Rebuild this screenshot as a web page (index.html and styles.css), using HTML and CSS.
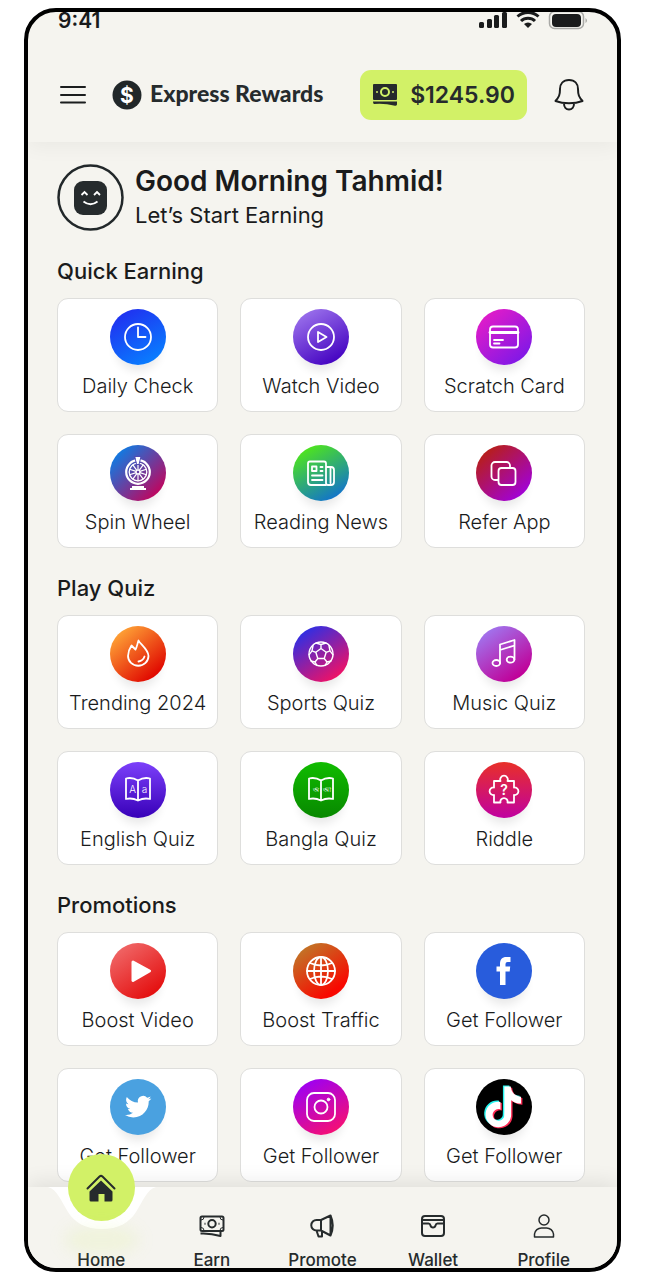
FILE: index.html
```
<!DOCTYPE html>
<html lang="en">
<head>
    <meta charset="UTF-8">
    <meta name="viewport" content="width=device-width, initial-scale=1.0">
    <title>Express Rewards</title>
    <link rel="stylesheet" href="styles.css">
</head>
<body>

    <div class="phone">
        <header class="header">
            <div class="status-bar">
                <span>9:41</span>
                <svg width="108" height="18" viewBox="0 0 108 18" aria-hidden="true">
                    <g fill="#1a1b1c">
                        <rect x="0" y="10" width="5" height="6" rx="1.5"/>
                        <rect x="8" y="7" width="5" height="9" rx="1.5"/>
                        <rect x="15" y="3" width="5" height="13" rx="1.5"/>
                        <rect x="23" y="0" width="5" height="16" rx="1.5"/>
                        <path d="M49 16l-4-4a6 6 0 0 1 8 0z"/>
                        <rect x="73" y="2" width="29" height="13" rx="4"/>
                    </g>
                    <path d="M42 9a10 10 0 0 1 14 0M38.500 4.500a15.500 15.500 0 0 1 21 0" fill="none" stroke="#1a1b1c" stroke-width="3"/>
                    <rect x="70.500" y="-.5" width="34" height="17" rx="5" fill="none" stroke="#a9a9a6" stroke-width="1.500"/>
                    <path d="M106.500 6v5q1.500-1 1.500-2.500T106.500 6z" fill="#a9a9a6"/>
                </svg>
            </div>
            <div class="toolbar">
                <button class="icon-btn" aria-label="Menu">
                    <svg width="26" height="20" viewBox="0 0 26 20" fill="none" stroke="#1b1d1e" stroke-width="2" stroke-linecap="round"><path d="M1 2h24M1 10h24M1 17.500h24"/></svg>
                </button>
                <a class="brand" href="#">
                    <svg width="30" height="30" viewBox="0 0 30 30"><circle cx="15" cy="15" r="14.500" fill="#212729"/><text class="coin" x="15" y="22.500" text-anchor="middle">$</text></svg>
                    <span>Express Rewards</span>
                </a>
                <button class="balance">
                    <svg width="26" height="24" viewBox="0 0 26 24"><path fill="#262b2c" d="M2 1h22a1 1 0 0 1 1 1v14a1 1 0 0 1-1 1H2a1 1 0 0 1-1-1V2a1 1 0 0 1 1-1zM1 18.500h24v3q-.5 1.500-2 1.200Q12 20 2 21q-1-.5-1-2.500z"/><circle cx="13" cy="9" r="4" fill="none" stroke="#d2f167" stroke-width="2"/><circle cx="5" cy="9" r="1" fill="#d2f167"/><circle cx="21" cy="9" r="1" fill="#d2f167"/></svg>
                    $1245.90
                </button>
                <button class="icon-btn" aria-label="Notifications">
                    <svg width="32" height="34" viewBox="0 0 32 34" fill="none" stroke="#1b1d1e" stroke-width="2" stroke-linejoin="round"><path d="M16 2C10 2 7 6 7 11c0 6-1 8-4.500 12 8 3 19 3 27 0C26 19 25 17 25 11c0-5-3-9-9-9zM11 25.500c0 3.500 2 6 5 6s5-2.500 5-6"/></svg>
                </button>
            </div>
        </header>

        <main class="content">
            <div class="greeting">
                <svg width="67" height="67" viewBox="0 0 67 67" aria-hidden="true">
                    <circle cx="33.500" cy="33.500" r="32" fill="none" stroke="#22282a" stroke-width="2.500"/>
                    <rect x="17" y="17" width="33" height="34" rx="9" fill="#262b2d"/>
                    <path d="M24.500 31l3-3 3 3M37 31l3-3 3 3M26.500 37.500q7 5.500 14 0" fill="none" stroke="#fff" stroke-width="1.800"/>
                </svg>
                <div>
                    <h1>Good Morning Tahmid!</h1>
                    <p>Let’s Start Earning</p>
                </div>
            </div>

            <section>
                <h2>Quick Earning</h2>
                <div class="grid">
                    <a class="card" href="#">
                        <svg class="icon clock" viewBox="0 0 56 56"><circle cx="28" cy="28" r="13"/><path d="M28 18.500v9.500h7.500"/></svg>
                        <span>Daily Check</span>
                    </a>
                    <a class="card" href="#">
                        <svg class="icon watch" viewBox="0 0 56 56"><circle cx="28" cy="28" r="13"/><path d="M25 23l8.500 5-8.500 5z"/></svg>
                        <span>Watch Video</span>
                    </a>
                    <a class="card" href="#">
                        <svg class="icon scratch" viewBox="0 0 56 56"><rect x="14" y="17.500" width="28" height="21" rx="3"/><path d="M18 31h9M18 34.500h5.500"/><path d="M14 23.500h28" stroke-width="2.800"/></svg>
                        <span>Scratch Card</span>
                    </a>
                    <a class="card" href="#">
                        <svg class="icon spin" viewBox="0 0 56 56">
                            <circle cx="28" cy="27" r="11.800" stroke-width="2.200"/>
                            <g stroke-width="1.200"><circle cx="28" cy="27" r="8.800" stroke-width="1.300"/><circle cx="28" cy="27" r="2"/><path d="M28 18.200V25M28 29v6.800M22.800 19.900l4 5.500M29.200 28.600l4 5.500M19.600 24.300l6.500 2.100M29.900 27.600l6.500 2.100M19.600 29.700l6.500-2.100M29.900 26.400l6.500-2.100M22.800 34.100l4-5.500M29.200 25.400l4-5.500"/></g>
                            <path d="M25 11.500h6l-2 8h-2z" fill="#fff" stroke="#514bb4" stroke-width="1"/>
                            <path d="M22 41h12v2h2v2H20v-2h2z" fill="#fff" stroke="none"/>
                        </svg>
                        <span>Spin Wheel</span>
                    </a>
                    <a class="card" href="#">
                        <svg class="icon news" viewBox="0 0 56 56"><path d="M33 40H18a3 3 0 0 1-3-3V18.500a2 2 0 0 1 2-2h14a2 2 0 0 1 2 2V38a2 2 0 0 0 2 2h3a3 3 0 0 0 3-3V25a3 3 0 0 0-3-3h-5"/><rect x="19" y="21.500" width="4.500" height="4.500"/><path d="M27.500 22h2M27.500 26h2M19 30.500h10.500M19 35h10.500M37.500 23v15"/></svg>
                        <span>Reading News</span>
                    </a>
                    <a class="card" href="#">
                        <svg class="icon refer" viewBox="0 0 56 56"><rect x="22.500" y="23" width="17" height="17" rx="3"/><path d="M22 35h-3a3.500 3.500 0 0 1-3.500-3.500v-11A3.500 3.500 0 0 1 19 17h11.500a3.500 3.500 0 0 1 3.500 3.500V23"/></svg>
                        <span>Refer App</span>
                    </a>
                </div>
            </section>

            <section>
                <h2>Play Quiz</h2>
                <div class="grid">
                    <a class="card" href="#">
                        <svg class="icon trending" viewBox="0 0 56 56"><path d="M28.500 14.500c1 3 10 9 10 15.500a10.200 9.700 0 0 1-20.500 0c0-5 1.500-7.500 3.500-10.500l4 4c1.500-2.500 1.800-5.500 3-9zM34.500 30.500c-1 3-3 4.500-6 5"/></svg>
                        <span>Trending 2024</span>
                    </a>
                    <a class="card" href="#">
                        <svg class="icon sports" viewBox="0 0 56 56"><g stroke-width="1.400"><circle cx="28" cy="28" r="12"/><path d="M28 22.500l5.200 3.800-2 6.200h-6.400l-2-6.200zM28 22.500v-4l-5-1.500M28 18.500l5-1.500M33.200 26.300l3.800-1.500-1-5M37 24.800l3 4M31.200 32.500l2.800 3.500 4-1M34 36l-2 3.500M24.800 32.500L22 36l2 3.500M22 36l-4-1M22.800 26.300L19 24.800l1-5M19 24.800l-3 4"/></g></svg>
                        <span>Sports Quiz</span>
                    </a>
                    <a class="card" href="#">
                        <svg class="icon music" viewBox="0 0 56 56"><path d="M24 37V18.500L38.500 14v19.500M24 24l14.500-4.500"/><ellipse cx="20.300" cy="37" rx="3.800" ry="3"/><ellipse cx="34.500" cy="33.700" rx="3.800" ry="3"/></svg>
                        <span>Music Quiz</span>
                    </a>
                    <a class="card" href="#">
                        <svg class="icon english" viewBox="0 0 56 56"><path d="M28 18.500C24 16 20 15.500 16 16.500v20.500c4-1 8-.5 12 1.500 4-2 8-2.500 12-1.500V16.500C36 15.500 32 16 28 18.500zM28 18.500v20"/><text x="22.500" y="31" font-size="10">A</text><text x="34.500" y="31" font-size="10">a</text></svg>
                        <span>English Quiz</span>
                    </a>
                    <a class="card" href="#">
                        <svg class="icon bangla" viewBox="0 0 56 56"><path d="M28 18.500C24 16 20 15.500 16 16.500v20.500c4-1 8-.5 12 1.500 4-2 8-2.500 12-1.500V16.500C36 15.500 32 16 28 18.500zM28 18.500v20"/><text x="22.500" y="30" font-size="7">অ</text><text x="34" y="30" font-size="7">আ</text></svg>
                        <span>Bangla Quiz</span>
                    </a>
                    <a class="card" href="#">
                        <svg class="icon riddle" viewBox="0 0 56 56"><path d="M18 19h6.500a3.800 3.800 0 1 1 7 0H38v6.500a3.800 3.800 0 1 1 0 7.500v7.500h-6.500a3.600 3.600 0 1 0-7 0H18V33a3.800 3.800 0 1 1 0-7.500z"/><text x="28" y="33" font-size="14" font-weight="600">?</text></svg>
                        <span>Riddle</span>
                    </a>
                </div>
            </section>

            <section>
                <h2>Promotions</h2>
                <div class="grid">
                    <a class="card" href="#">
                        <svg class="icon boost" viewBox="0 0 56 56"><path d="M23 19l16.500 9L23 37.500z" fill="#fff" stroke-width="3"/></svg>
                        <span>Boost Video</span>
                    </a>
                    <a class="card" href="#">
                        <svg class="icon traffic" viewBox="0 0 56 56"><circle cx="28" cy="28" r="14"/><ellipse cx="28" cy="28" rx="7" ry="14"/><path d="M28 14v28M14 28h28M17 20q11 5 22 0M17 36q11-5 22 0"/></svg>
                        <span>Boost Traffic</span>
                    </a>
                    <a class="card" href="#">
                        <svg class="icon facebook" viewBox="0 0 56 56"><path d="M24 42V28.500h-3.500v-5H24V21c0-4.500 2-7 6.500-7h4v5h-3q-2 0-2 2v2.500h4.700l-.5 5h-4.200V42z" fill="#fff" stroke="none"/></svg>
                        <span>Get Follower</span>
                    </a>
                    <a class="card" href="#">
                        <svg class="icon twitter" viewBox="0 0 56 56"><path transform="translate(15 14.500) scale(1.100)" fill="#fff" stroke="none" d="M23.950 4.570a10 10 0 0 1-2.820.770 4.960 4.960 0 0 0 2.160-2.720c-.95.550-2 .950-3.130 1.180a4.920 4.920 0 0 0-8.380 4.480C7.690 8.090 4.070 6.130 1.640 3.160a4.920 4.920 0 0 0 1.520 6.570 4.900 4.900 0 0 1-2.230-.61v.06a4.920 4.920 0 0 0 3.950 4.830 5 5 0 0 1-2.210.08 4.940 4.940 0 0 0 4.600 3.420A9.870 9.870 0 0 1 0 19.540a14 14 0 0 0 7.550 2.210c9.050 0 14-7.500 14-13.980 0-.21 0-.42-.02-.63a9.940 9.940 0 0 0 2.460-2.550z"/></svg>
                        <span>Get Follower</span>
                    </a>
                    <a class="card" href="#">
                        <svg class="icon instagram" viewBox="0 0 56 56"><rect x="14" y="14" width="28" height="28" rx="7"/><circle cx="28" cy="28" r="6.500"/><circle cx="35.500" cy="20.500" r="1.300" fill="#fff" stroke-width="1"/></svg>
                        <span>Get Follower</span>
                    </a>
                    <a class="card" href="#">
                        <svg class="icon tiktok" viewBox="0 0 56 56">
                            <defs><path id="note" d="M12.500 0h3.900c.1 1.500.6 3.100 1.800 4.200 1.100 1.100 2.700 1.600 4.200 1.800v4c-1.400 0-2.900-.3-4.200-1-.6-.3-1.100-.6-1.600-.9v8.700c-.1 1.400-.5 2.800-1.400 3.900-1.300 1.900-3.600 3.200-5.900 3.200-1.400.1-2.900-.3-4.100-1-2-1.200-3.400-3.400-3.600-5.700v-1.500c.2-1.900 1.100-3.700 2.600-5 1.700-1.400 4-2.100 6.100-1.700v4.400c-1-.3-2.100-.2-3 .4-.6.4-1.100 1-1.400 1.800-.2.500-.2 1.100-.1 1.600.2 1.600 1.800 3 3.500 2.900 1.100 0 2.200-.7 2.800-1.600.2-.3.400-.7.400-1.100.1-1.800.1-3.600.1-5.300V0z"/></defs>
                            <g stroke="none"><use href="#note" fill="#25f4ee" transform="translate(5.500 6.500) scale(1.700)"/><use href="#note" fill="#fe2c55" transform="translate(8.300 8.700) scale(1.700)"/><use href="#note" fill="#fff" transform="translate(6.900 7.600) scale(1.700)"/></g>
                        </svg>
                        <span>Get Follower</span>
                    </a>
                </div>
            </section>
        </main>

        <nav class="nav">
            <!-- white curve behind the active tab -->
            <svg class="notch" width="108" height="42" viewBox="0 0 108 42" aria-hidden="true"><path d="M0 0C9 2 13 14 20 25S38 42 54 42 81 36 88 25 99 2 108 0z" fill="#fff"/></svg>
            <a class="active" href="#">
                <span class="home-btn"><svg width="30" height="28" viewBox="0 0 30 28"><path d="M1.500 14.500L13.500 2.500q1.500-1.200 3 0l12 12" fill="none" stroke="#262b2c" stroke-width="2" stroke-linecap="round"/><path d="M15 6.500L26.500 17.500V26q0 1.500-1.500 1.500h-6.500V20h-6v7.500H5q-1.500 0-1.500-1.500v-8.500z" fill="#262b2c"/></svg></span>
                Home
            </a>
            <a href="#">
                <svg width="28" height="28" viewBox="0 0 28 28"><rect x="2.500" y="4.500" width="23" height="14.500" rx="1.500"/><circle cx="14" cy="11.700" r="3.700"/><path d="M6.500 11.700h1M20.500 11.700h1M2.500 21.500q10-.5 20 2.500v-4"/><path d="M3 8q3 0 3-3M25 8q-3 0-3-3M3 15.500q3 0 3 3M25 15.500q-3 0-3 3" stroke-width="1"/></svg>
                Earn
            </a>
            <a href="#">
                <svg width="28" height="28" viewBox="0 0 28 28"><path d="M13 8H8.500a5.200 5.200 0 0 0 0 10.500H13l9.500 5V3.500zM13 8v10.500M22.500 3.500q4.500 10 0 20M8.500 18.500l2 6H14v-5.500"/></svg>
                Promote
            </a>
            <a href="#">
                <svg width="28" height="28" viewBox="0 0 28 28"><rect x="3" y="4" width="22" height="20" rx="3"/><path d="M3 8h22M3 11.500h6.500q1.500 0 2 2t2.500 2 2.500-2 2-2H25"/></svg>
                Wallet
            </a>
            <a href="#">
                <svg width="28" height="28" viewBox="0 0 28 28"><g stroke-width="1.500"><circle cx="14" cy="8" r="5"/><path d="M4.500 25v-3a7 7 0 0 1 7-6h5a7 7 0 0 1 7 6v3z"/></g></svg>
                Profile
            </a>
        </nav>
    </div>

</body>
</html>
```
FILE: styles.css
```
* {
    box-sizing: border-box;
}
body {
    margin: 0;
    padding: 8px 24px;
    background: #fff;
    font-family: Inter, "Noto Sans", sans-serif;
    color: #1a1b1c;
}
a {
    color: inherit;
    text-decoration: none;
}
button {
    border: none;
    padding: 0;
    background: none;
    font-family: inherit;
    color: inherit;
    cursor: pointer;
}
svg {
    display: block;
    flex-shrink: 0;
}
.phone {
    border: 4px solid #000;
    border-radius: 32px;
    background: #f5f4ef;
    overflow: hidden;
}

/* Header */
.header {
    padding: 0 30px 22px;
    box-shadow: 0 4px 20px rgba(0, 0, 0, 0.05);
}
.status-bar {
    display: flex;
    justify-content: space-between;
    font-size: 21px;
    line-height: 18px;
    font-weight: 600;
}
.toolbar {
    display: flex;
    align-items: center;
    margin-top: 40px;
}
.icon-btn {
    padding: 0 2px;
}
.brand {
    display: flex;
    align-items: center;
    gap: 8px;
    margin-left: 24px;
    margin-right: auto;
    font-family: Lato, sans-serif;
    font-size: 23px;
    line-height: 26px;
    font-weight: 900;
    color: #262b2d;
}
.brand span {
    padding-bottom: 4px;
}
.coin {
    font: 700 21px Inter, sans-serif;
    fill: #fff;
}
.balance {
    display: flex;
    align-items: center;
    gap: 12px;
    height: 50px;
    margin-right: 24px;
    padding: 0 12px;
    border-radius: 11px;
    background: #d2f167;
    font-size: 23px;
    font-weight: 600;
    color: #262b2c;
}

/* Content */
.content {
    padding: 22px 32px 5px 29px;
}
.greeting {
    display: flex;
    gap: 11px;
    margin-bottom: 24px;
}
.greeting h1 {
    margin: 0;
    font-size: 28px;
    line-height: 35px;
    font-weight: 600;
}
.greeting p {
    margin: 0;
    font-size: 22px;
    line-height: 32px;
}
section + section {
    margin-top: 24px;
}
h2 {
    margin: 0 0 11px;
    font-size: 22px;
    line-height: 32px;
    font-weight: 500;
}
.grid {
    display: grid;
    grid-template-columns: repeat(3, 1fr);
    gap: 22px;
}
.card {
    display: flex;
    flex-direction: column;
    align-items: center;
    gap: 9px;
    padding: 10px 0 13px;
    border: 1px solid #dededc;
    border-radius: 11px;
    background: #fff;
    font-size: 20px;
    line-height: 24px;
    font-weight: 300;
    white-space: nowrap;
}
.icon {
    width: 56px;
    height: 56px;
    border-radius: 50%;
    box-shadow: 0 12px 10px -6px rgba(0, 0, 0, 0.09);
    fill: none;
    stroke: #fff;
    stroke-width: 1.8px;
    stroke-linecap: round;
    stroke-linejoin: round;
}
.icon text {
    fill: #fff;
    stroke: none;
    text-anchor: middle;
}
.clock { background: linear-gradient(150deg, #2030f0 10%, #0880ff 90%); }
.watch { background: linear-gradient(150deg, #a078ee 5%, #4200c0 90%); }
.scratch { background: linear-gradient(140deg, #e41cc8 10%, #7c18e8 90%); }
.spin { background: linear-gradient(135deg, #0880e8 10%, #c80058 90%); }
.news { background: linear-gradient(150deg, #50e818 10%, #1070d0 90%); }
.refer { background: linear-gradient(140deg, #b82010 10%, #a000e0 90%); }
.trending { background: linear-gradient(140deg, #ffa838 10%, #e00800 85%); }
.sports { background: linear-gradient(145deg, #2830e8 10%, #f81060 90%); }
.music { background: linear-gradient(145deg, #a078f0 10%, #c00098 85%); }
.english { background: linear-gradient(#7c40fa, #3800b8); }
.bangla { background: linear-gradient(#10bc00, #088800); }
.riddle { background: linear-gradient(#e83028, #c000a0); }
.boost { background: linear-gradient(145deg, #f06868 10%, #e41010 85%); }
.traffic { background: linear-gradient(145deg, #c07828 10%, #f80800 80%); }
.facebook { background: #285cdc; }
.twitter { background: #4aa1e0; }
.instagram { background: linear-gradient(150deg, #9c00f4 10%, #f81070 90%); }
.tiktok { background: #000; }

/* Bottom navigation */
.nav {
    position: relative;
    display: grid;
    grid-template-columns: repeat(5, 1fr);
    padding: 25px 18px 0;
    background: #f5f4ef;
    box-shadow: 0 -4px 20px rgba(0, 0, 0, 0.09);
}
.nav a {
    display: flex;
    flex-direction: column;
    align-items: center;
    justify-content: flex-end;
    gap: 12px;
    font-size: 17px;
    line-height: 16px;
    font-weight: 500;
    color: #262b2c;
}
.nav a > svg {
    fill: none;
    stroke: #262b2c;
    stroke-width: 2px;
    stroke-linejoin: round;
}
.nav .active {
    position: relative;
}
.notch {
    position: absolute;
    top: 0;
    left: 20px;
}
.home-btn {
    position: absolute;
    bottom: 47px;
    display: flex;
    align-items: center;
    justify-content: center;
    width: 67px;
    height: 67px;
    border-radius: 50%;
    background: #d2f167;
}
.home-btn::before {
    content: "";
    position: absolute;
    top: 76px;
    width: 67px;
    height: 20px;
    border-radius: 50%;
    box-shadow: 0 0 14px 4px rgba(210, 241, 103, 0.13);
    background: rgba(210, 241, 103, 0.13);
    filter: blur(6px);
}
```
